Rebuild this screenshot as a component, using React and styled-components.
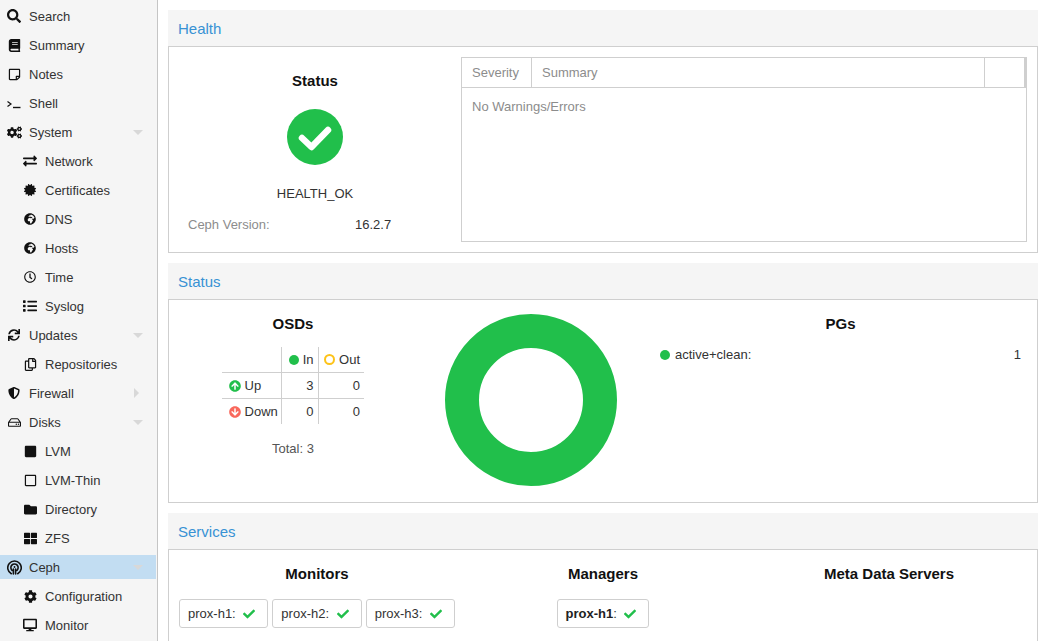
import styled, { createGlobalStyle } from "styled-components";
import {
  FaSearch, FaBook, FaRegStickyNote, FaCogs, FaExchangeAlt, FaCertificate, FaGlobeAfrica,
  FaRegClock, FaList, FaSync, FaRegCopy, FaShieldAlt, FaRegHdd, FaSquare, FaRegSquare,
  FaFolder, FaThLarge, FaCog, FaDesktop, FaCheck, FaArrowCircleUp, FaArrowCircleDown,
} from "react-icons/fa";

const GlobalStyle = createGlobalStyle`
  html, body { margin: 0; padding: 0; height: 100%; overflow: hidden; background: #fff; }
  body { font-family: "Liberation Sans", Arial, sans-serif; font-size: 13px; color: #333; }
  * { box-sizing: border-box; }
`;

function ShellIcon() {
  return (
    <svg width="14" height="14" viewBox="0 0 14 14" fill="none" stroke="#111" strokeWidth="1.2">
      <path d="M0.5 5.5 L4 8 L0.5 10.5" />
      <path d="M6 11.5 H13.5" strokeWidth="1.4" />
    </svg>
  );
}

function CephIcon() {
  return (
    <svg width="15" height="15" viewBox="0 0 16 16" fill="none" stroke="#111" strokeWidth="1.7" strokeLinecap="round">
      <path d="M4.6 14.6 A7.2 7.2 0 1 1 11.4 14.6" />
      <path d="M5.6 11.2 A3.9 3.9 0 1 1 10.4 11.2" />
      <path d="M6.8 14.8 V9.6 M9.2 14.8 V9.6" />
      <circle cx="8" cy="7.4" r="1" fill="#111" stroke="none" />
    </svg>
  );
}

const menu = [
  { label: "Search", icon: <FaSearch size={14} /> },
  { label: "Summary", icon: <FaBook size={13} /> },
  { label: "Notes", icon: <FaRegStickyNote size={13} /> },
  { label: "Shell", icon: <ShellIcon /> },
  { label: "System", icon: <FaCogs size={15} />, caret: "down" },
  { label: "Network", icon: <FaExchangeAlt size={14} />, sub: true },
  { label: "Certificates", icon: <FaCertificate size={12} />, sub: true },
  { label: "DNS", icon: <FaGlobeAfrica size={12} />, sub: true },
  { label: "Hosts", icon: <FaGlobeAfrica size={12} />, sub: true },
  { label: "Time", icon: <FaRegClock size={12} />, sub: true },
  { label: "Syslog", icon: <FaList size={14} />, sub: true },
  { label: "Updates", icon: <FaSync size={12} />, caret: "down" },
  { label: "Repositories", icon: <FaRegCopy size={13} />, sub: true },
  { label: "Firewall", icon: <FaShieldAlt size={12} />, caret: "right" },
  { label: "Disks", icon: <FaRegHdd size={13} />, caret: "down" },
  { label: "LVM", icon: <FaSquare size={13} />, sub: true },
  { label: "LVM-Thin", icon: <FaRegSquare size={13} />, sub: true },
  { label: "Directory", icon: <FaFolder size={13} />, sub: true },
  { label: "ZFS", icon: <FaThLarge size={13} />, sub: true },
  { label: "Ceph", icon: <CephIcon />, caret: "down", active: true },
  { label: "Configuration", icon: <FaCog size={13} />, sub: true },
  { label: "Monitor", icon: <FaDesktop size={14} />, sub: true },
];

export default function App() {
  return (
    <>
      <GlobalStyle />
      <Page>
        <Sidebar>
          {menu.map((item) => (
            <MenuRow key={item.label} $active={item.active} $sub={item.sub}>
              <MenuIcon>{item.icon}</MenuIcon>
              <span>{item.label}</span>
              {item.caret && <Caret $dir={item.caret} />}
            </MenuRow>
          ))}
        </Sidebar>

        <Main>
          <Panel>
            <PanelTitle>Health</PanelTitle>
            <HealthBody>
              <StatusColumn>
                <Heading>Status</Heading>
                <BigCheck>
                  <svg width="56" height="56" viewBox="0 0 56 56">
                    <circle cx="28" cy="28" r="28" fill="#21bf4b" />
                    <path d="M15 29 L24.5 38 L41 21" fill="none" stroke="#fff" strokeWidth="6.5" strokeLinecap="round" strokeLinejoin="round" />
                  </svg>
                </BigCheck>
                <HealthText>HEALTH_OK</HealthText>
                <VersionRow>
                  <VersionLabel>Ceph Version:</VersionLabel>
                  <span>16.2.7</span>
                </VersionRow>
              </StatusColumn>
              <Grid>
                <GridHeader>
                  <GridCell $width="70px">Severity</GridCell>
                  <GridCell $grow>Summary</GridCell>
                  <GridCell $width="39px" $last />
                </GridHeader>
                <GridEmpty>No Warnings/Errors</GridEmpty>
              </Grid>
            </HealthBody>
          </Panel>

          <Panel>
            <PanelTitle>Status</PanelTitle>
            <StatusBody>
              <OsdColumn>
                <Heading>OSDs</Heading>
                <OsdTable>
                  <tbody>
                    <tr>
                      <OsdCell $first />
                      <OsdCell><Dot $color="#21bf4b" /> In</OsdCell>
                      <OsdCell $end><Ring /> Out</OsdCell>
                    </tr>
                    <tr>
                      <OsdCell $first><FaArrowCircleUp color="#21bf4b" size={12} /> Up</OsdCell>
                      <OsdCell>3</OsdCell>
                      <OsdCell $end>0</OsdCell>
                    </tr>
                    <tr>
                      <OsdCell $first><FaArrowCircleDown color="#f9685c" size={12} /> Down</OsdCell>
                      <OsdCell>0</OsdCell>
                      <OsdCell $end>0</OsdCell>
                    </tr>
                  </tbody>
                </OsdTable>
                <Total>Total: 3</Total>
              </OsdColumn>
              <DonutColumn>
                <svg width="172" height="172" viewBox="0 0 172 172">
                  <circle cx="86" cy="86" r="69" fill="none" stroke="#21bf4b" strokeWidth="34" />
                </svg>
              </DonutColumn>
              <PgColumn>
                <Heading>PGs</Heading>
                <PgRow>
                  <Dot $color="#21bf4b" />
                  <PgLabel>active+clean:</PgLabel>
                  <span>1</span>
                </PgRow>
              </PgColumn>
            </StatusBody>
          </Panel>

          <Panel>
            <PanelTitle>Services</PanelTitle>
            <ServicesBody>
              <ServiceColumn $width="296px">
                <Heading>Monitors</Heading>
                <Chips>
                  {["prox-h1", "prox-h2", "prox-h3"].map((name) => (
                    <Chip key={name}>{name}: <FaCheck color="#21bf4b" size={12} /></Chip>
                  ))}
                </Chips>
              </ServiceColumn>
              <ServiceColumn $width="276px">
                <Heading>Managers</Heading>
                <Chips>
                  <Chip><b>prox-h1</b>: <FaCheck color="#21bf4b" size={12} /></Chip>
                </Chips>
              </ServiceColumn>
              <ServiceColumn $width="296px">
                <Heading>Meta Data Servers</Heading>
              </ServiceColumn>
            </ServicesBody>
          </Panel>
        </Main>
      </Page>
    </>
  );
}

const Page = styled.div`
  display: flex;
  width: 1046px;
  height: 641px;
  overflow: hidden;
`;

const Sidebar = styled.nav`
  width: 158px;
  flex: none;
  padding: 4px 1px 0 0;
  background: #f5f5f5;
  border-right: 1px solid #c5c5c5;
  display: flex;
  flex-direction: column;
  gap: 5px;
`;

const MenuRow = styled.div`
  display: flex;
  align-items: center;
  flex: none;
  height: 24px;
  padding-left: ${(p) => (p.$sub ? "20px" : "4px")};
  background: ${(p) => (p.$active ? "#c2ddf2" : "transparent")};
  color: #333;
  position: relative;
`;

const MenuIcon = styled.span`
  display: flex;
  align-items: center;
  justify-content: center;
  width: 20px;
  margin-right: 5px;
  color: #111;
`;

const Caret = styled.i`
  position: absolute;
  top: 10px;
  right: ${(p) => (p.$dir === "right" ? "17px" : "13px")};
  width: 0;
  height: 0;
  ${(p) =>
    p.$dir === "right"
      ? "border-top: 5px solid transparent; border-bottom: 5px solid transparent; border-left: 5px solid #d8d8d8; top: 7px;"
      : "border-left: 5.5px solid transparent; border-right: 5.5px solid transparent; border-top: 5px solid #d8d8d8;"}
`;

const Main = styled.main`
  flex: 1;
  padding: 10px 8px 0 10px;
  display: flex;
  flex-direction: column;
  gap: 10px;
  overflow: hidden;
`;

const Panel = styled.section`
  flex: none;
`;

const PanelTitle = styled.div`
  height: 36px;
  padding-left: 10px;
  display: flex;
  align-items: center;
  background: #f5f5f5;
  color: #3892d4;
  font-size: 15px;
`;

const PanelBody = styled.div`
  border: 1px solid #cfcfcf;
  background: #fff;
`;

const HealthBody = styled(PanelBody)`
  height: 207px;
  padding: 10px 10px 10px 0;
  display: flex;
`;

const StatusColumn = styled.div`
  width: 292px;
  display: flex;
  flex-direction: column;
  align-items: center;
  padding-top: 15px;
`;

const Heading = styled.div`
  font-size: 15px;
  font-weight: bold;
  color: #111;
  text-align: center;
  line-height: 18px;
`;

const BigCheck = styled.div`
  height: 56px;
  margin-top: 19px;
`;

const HealthText = styled.div`
  margin-top: 21px;
  line-height: 16px;
`;

const VersionRow = styled.div`
  width: 100%;
  margin-top: 15px;
  padding-left: 19px;
  display: flex;
  line-height: 16px;
`;

const VersionLabel = styled.span`
  width: 167px;
  color: #8c8c8c;
`;

const Grid = styled.div`
  flex: 1;
  border: 1px solid #cfcfcf;
`;

const GridHeader = styled.div`
  display: flex;
  height: 30px;
  border-bottom: 1px solid #cfcfcf;
  border-right: 2px solid #cfcfcf;
`;

const GridCell = styled.div`
  width: ${(p) => p.$width || "auto"};
  flex: ${(p) => (p.$grow ? "1" : "none")};
  padding-left: 10px;
  display: flex;
  align-items: center;
  color: #8c8c8c;
  border-right: ${(p) => (p.$last ? "none" : "1px solid #cfcfcf")};
`;

const GridEmpty = styled.div`
  padding: 11px 10px;
  line-height: 16px;
  color: #8c8c8c;
`;

const StatusBody = styled(PanelBody)`
  height: 204px;
  display: grid;
  grid-template-columns: 248px 228px 1fr;
`;

const OsdColumn = styled.div`
  padding-top: 15px;
  display: flex;
  flex-direction: column;
  align-items: center;
`;

const OsdTable = styled.table`
  margin-top: 14px;
  border-collapse: collapse;
  width: 142px;
  table-layout: fixed;
  tr + tr td { border-top: 1px solid #cfcfcf; }
`;

const OsdCell = styled.td`
  height: 25.5px;
  padding: 0 ${(p) => (p.$first ? "0" : "4px")} 0 ${(p) => (p.$first ? "7px" : "0")};
  width: ${(p) => (p.$first ? "59px" : p.$end ? "46px" : "37px")};
  white-space: nowrap;
  text-align: ${(p) => (p.$first ? "left" : "right")};
  border-right: ${(p) => (p.$end ? "none" : "1px solid #cfcfcf")};
  svg { vertical-align: -2px; }
`;

const Dot = styled.span`
  display: inline-block;
  width: 10px;
  height: 10px;
  border-radius: 50%;
  vertical-align: -1px;
  background: ${(p) => p.$color};
`;

const Ring = styled.span`
  display: inline-block;
  width: 11px;
  height: 11px;
  border-radius: 50%;
  vertical-align: -1px;
  border: 2px solid #fdc319;
`;

const Total = styled.div`
  margin-top: 17px;
  color: #555;
  line-height: 16px;
`;

const DonutColumn = styled.div`
  display: flex;
  justify-content: center;
  align-items: center;
  padding-bottom: 2px;
`;

const PgColumn = styled.div`
  padding: 15px 16px 0 15px;
`;

const PgRow = styled.div`
  display: flex;
  align-items: center;
  margin-top: 14px;
  line-height: 16px;
`;

const PgLabel = styled.span`
  flex: 1;
  margin-left: 5px;
`;

const ServicesBody = styled(PanelBody)`
  height: 120px;
  display: flex;
  padding-top: 15px;
  border-bottom: none;
`;

const ServiceColumn = styled.div`
  width: ${(p) => p.$width};
  flex: none;
  display: flex;
  flex-direction: column;
  align-items: center;
`;

const Chips = styled.div`
  margin-top: 16px;
  display: flex;
  gap: 4px;
`;

const Chip = styled.div`
  height: 29px;
  padding: 0 12px 0 8px;
  display: flex;
  align-items: center;
  white-space: pre;
  border: 1px solid #cfcfcf;
  border-radius: 3px;
  b { color: #222; }
  svg { margin-left: 4px; }
`;
